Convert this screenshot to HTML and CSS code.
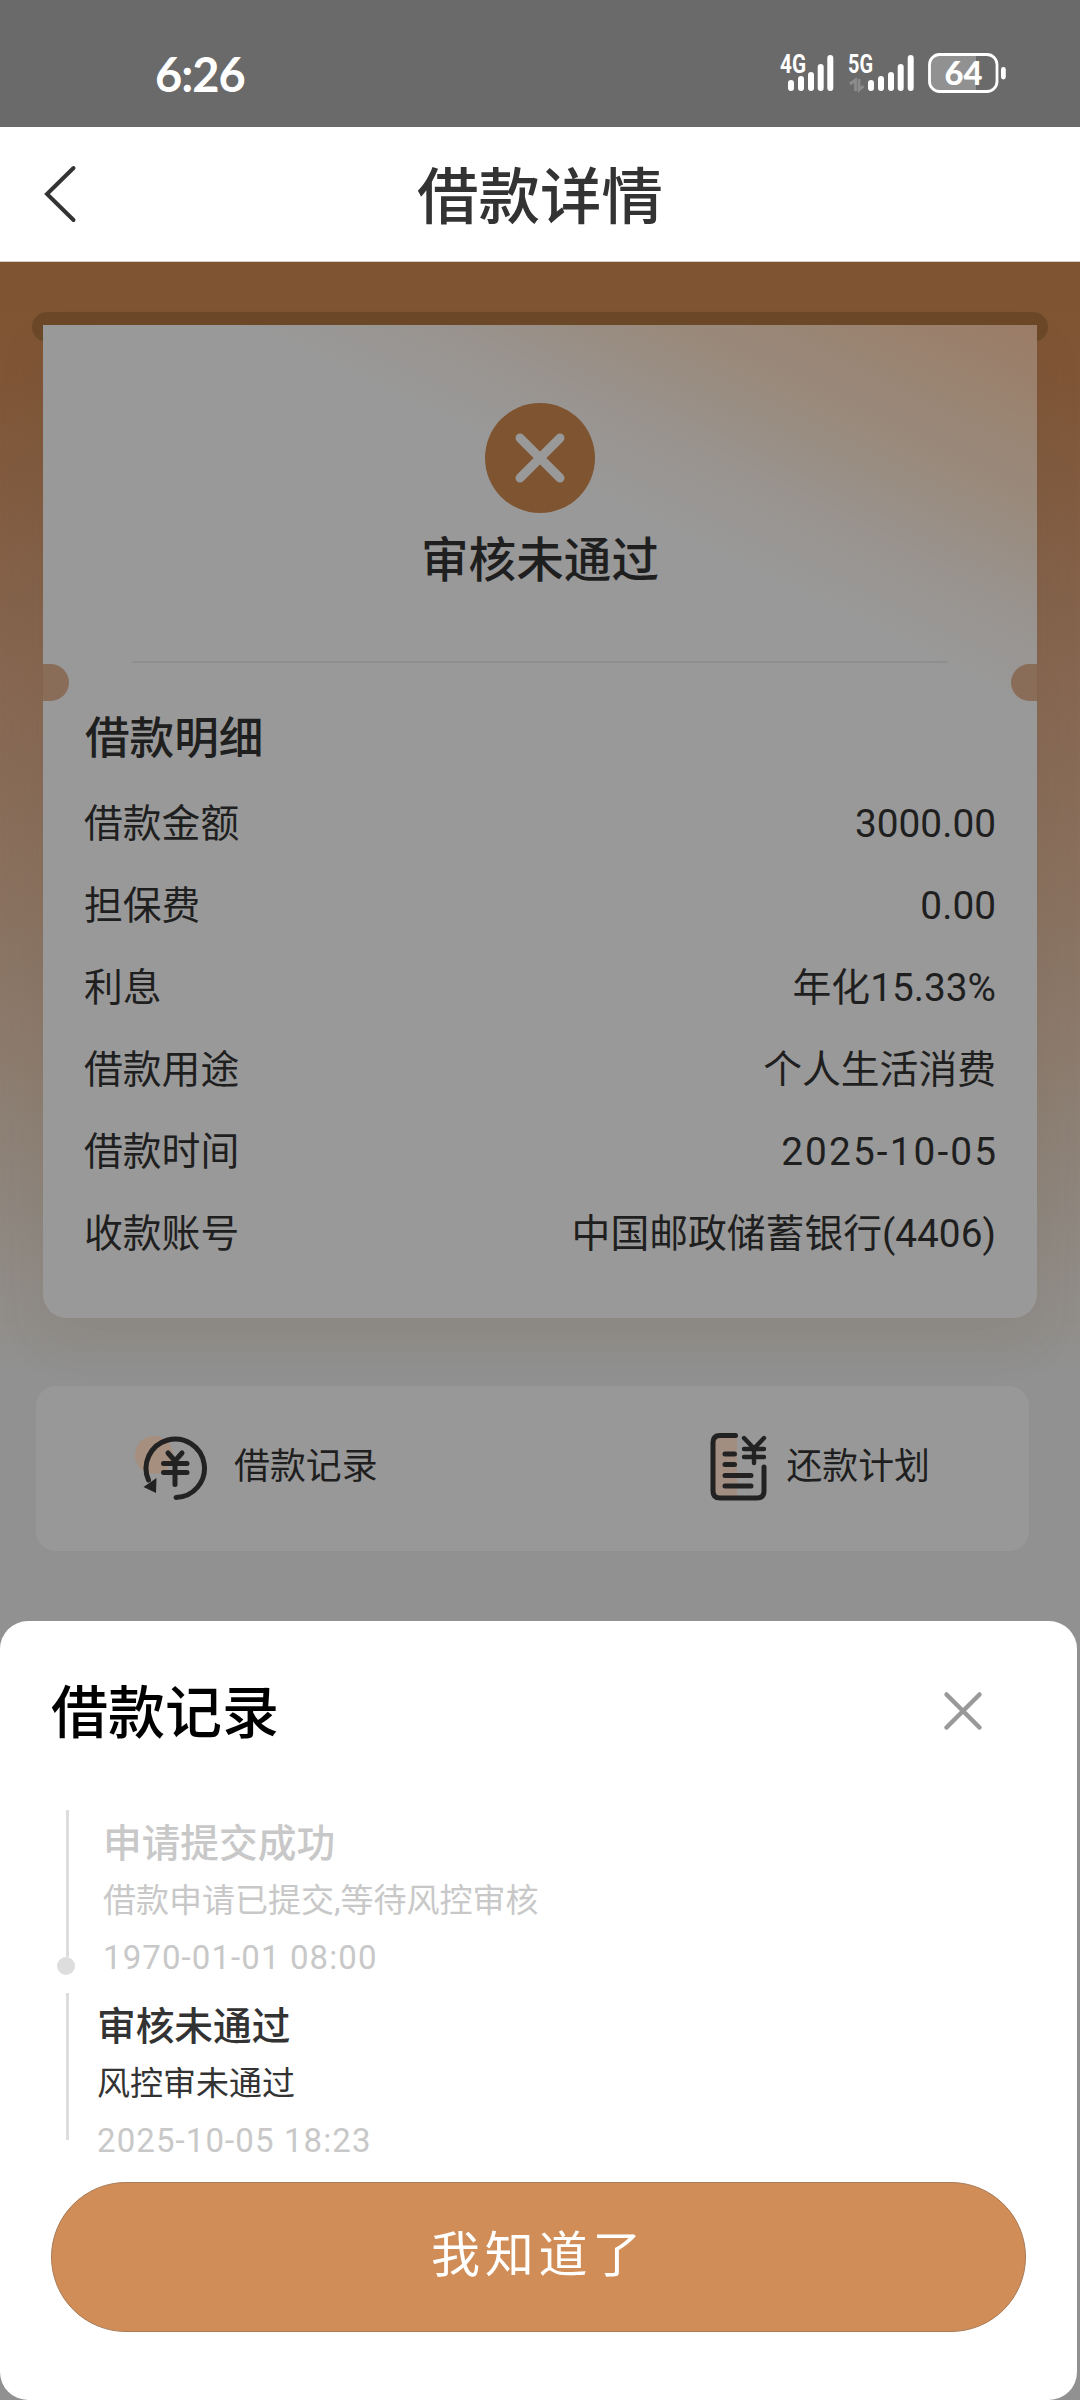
FILE: index.html
```html
<!DOCTYPE html>
<html lang="zh-CN">
<head>
<meta charset="utf-8">
<title>借款详情</title>
<link rel="stylesheet" href="styles.css">
</head>
<body>
<div class="screen">
  <div class="status">
    <span class="clock">6:26</span>
    <svg class="status-icons" width="228" height="48" viewBox="778 50 228 48">
      <g fill="#fff" font-family="Roboto, sans-serif" font-weight="700">
        <text x="780" y="73" font-size="25" textLength="26" lengthAdjust="spacingAndGlyphs">4G</text>
        <text x="848" y="73" font-size="25" textLength="25" lengthAdjust="spacingAndGlyphs">5G</text>
      </g>
      <g stroke="#fff" stroke-width="6" stroke-linecap="round">
        <path d="M791 83V88M801 79V88M811 75V88M820.700 67V88M830.300 58V88"/>
        <path d="M871 83V88M881 79V88M891 75V88M900.700 67V88M910.700 58V88"/>
      </g>
      <path d="M850 84L855.500 80V91M859 79V90L863.500 86" fill="none" stroke="#8c8c8c" stroke-width="2.800"/>
      <path d="M940 55H976V91H940Q930 91 930 81V65Q930 55 940 55Z" fill="#919191"/>
      <rect x="929.500" y="54.500" width="67.500" height="37" rx="10" fill="none" stroke="#fff" stroke-width="2.800"/>
      <rect x="1001" y="67" width="4.800" height="12.500" rx="2.400" fill="#fff"/>
      <text x="944.500" y="85" font-family="Lato, sans-serif" font-weight="900" font-size="33" fill="#fff" textLength="38" lengthAdjust="spacingAndGlyphs">64</text>
    </svg>
  </div>
  <header class="header">
    <svg class="back" width="40" height="64" viewBox="0 0 40 64"><path d="M30.500 6L4 32L30.500 58" fill="none" stroke="#333" stroke-width="4" stroke-linecap="round"/></svg>
    <h1>借款详情</h1>
  </header>
  <main class="main">
    <div class="slot"></div>
    <section class="card">
      <svg class="result-icon" width="110" height="110" viewBox="0 0 110 110">
        <circle cx="55" cy="55" r="55" fill="#7f5431"/>
        <path d="M35 35L75 75M75 35L35 75" stroke="#999" stroke-width="9" stroke-linecap="round"/>
      </svg>
      <div class="result">审核未通过</div>
      <div class="divider"></div>
      <span class="notch notch-left"></span>
      <span class="notch notch-right"></span>
      <h2>借款明细</h2>
      <dl class="rows">
        <div><dt>借款金额</dt><dd>3000.00</dd></div>
        <div><dt>担保费</dt><dd>0.00</dd></div>
        <div><dt>利息</dt><dd>年化15.33%</dd></div>
        <div><dt>借款用途</dt><dd>个人生活消费</dd></div>
        <div><dt>借款时间</dt><dd class="date">2025-10-05</dd></div>
        <div><dt>收款账号</dt><dd>中国邮政储蓄银行(4406)</dd></div>
      </dl>
    </section>
    <nav class="actions">
      <div class="action">
        <svg width="76" height="70" viewBox="132 1432 76 70">
          <circle cx="154" cy="1455" r="19" fill="#a68f7f"/>
          <g fill="none" stroke="#222" stroke-linecap="round">
            <path d="M176 1497.500A29.200 29.200 0 1 0 148.500 1480" stroke-width="5"/>
            <path d="M168 1453L175 1461L182 1453M163.500 1463.500H187M163.500 1472.500H187M175 1461V1484.500" stroke-width="5"/>
          </g>
          <path d="M143.500 1487L156.500 1478L156 1493Z" fill="#222"/>
        </svg>
        <span>借款记录</span>
      </div>
      <div class="action">
        <svg width="60" height="70" viewBox="709 1432 60 70">
          <rect x="714" y="1436" width="23" height="62" fill="#a18e80"/>
          <g fill="none" stroke="#222" stroke-width="5" stroke-linecap="round" stroke-linejoin="round">
            <path d="M735.500 1435.500H720Q713 1435.500 713 1442.500V1491Q713 1498 720 1498H757Q764 1498 764 1491V1467"/>
            <path d="M725 1454H734.500M725 1464.500H734.500M725 1475.500H751M725 1486H751"/>
            <path d="M744 1438L754 1448.500L764 1438M744 1449H764M744 1457H764M754 1449V1463" stroke-width="4.400"/>
          </g>
        </svg>
        <span>还款计划</span>
      </div>
    </nav>
  </main>
  <section class="sheet">
    <div class="sheet-head">
      <h2>借款记录</h2>
      <svg width="40" height="40" viewBox="0 0 40 40"><path d="M3.500 3.500L36.500 36.500M36.500 3.500L3.500 36.500" stroke="#999" stroke-width="4.500" stroke-linecap="round"/></svg>
    </div>
    <ol class="timeline">
      <li class="past">
        <strong>申请提交成功</strong>
        <p>借款申请已提交,等待风控审核</p>
        <time>1970-01-01 08:00</time>
      </li>
      <li class="current">
        <strong>审核未通过</strong>
        <p>风控审未通过</p>
        <time>2025-10-05 18:23</time>
      </li>
    </ol>
    <button class="confirm">我知道了</button>
  </section>
</div>
</body>
</html>
```
FILE: styles.css
```css
* { box-sizing: border-box; margin: 0; padding: 0; }

body {
  width: 1080px;
  font-family: Roboto, "Noto Sans CJK SC", sans-serif;
  color: #1f1f1f;
}

svg { display: block; flex: none; }

.screen {
  position: relative;
  display: flex;
  flex-direction: column;
  width: 1080px;
  height: 2400px;
  overflow: hidden;
  background: #919191;
}

.status {
  display: flex;
  justify-content: space-between;
  height: 127px;
  padding: 50px 74px 0 155px;
  background: #6a6a6a;
}
.clock {
  font-family: Lato, sans-serif;
  font-size: 47px;
  line-height: 48px;
  font-weight: 700;
  letter-spacing: -1px;
  color: #fff;
}

.header {
  display: grid;
  grid-template-columns: 100px 1fr 100px;
  align-items: center;
  height: 135px;
  background: #fff;
  border-bottom: 1px solid #d8cec5;
}
.back { margin-left: 43px; }
.header h1 {
  padding-top: 8px;
  font-size: 61.5px;
  line-height: 90px;
  font-weight: 500;
  text-align: center;
  color: #333;
}

.main {
  flex: 1;
  padding-top: 50px;
  background: linear-gradient(#7f5431 0, #7f5536 110px, #866650 400px, #8a7260 650px, #8e8379 900px, #918e8a 1060px, #919191 1110px);
}
.slot {
  height: 30px;
  margin: 0 32px -17px;
  border-radius: 15px;
  background: #6c4829;
}
.card {
  position: relative;
  display: flex;
  flex-direction: column;
  align-items: center;
  height: 993px;
  margin: 0 43px;
  padding: 78px 42px 0;
  border-radius: 0 0 24px 24px;
  background: linear-gradient(206deg, #9b7c66 0, #9a8370 80px, #998c80 190px, #999490 270px, #999 350px);
  box-shadow: 0 24px 48px rgba(90, 80, 60, .1);
}
.result {
  margin-top: 18px;
  font-size: 47.6px;
  line-height: 60px;
  font-weight: 500;
}
.divider {
  width: 816px;
  height: 2px;
  margin-top: 70px;
  background: #8f8f8f;
}
.notch {
  position: absolute;
  top: 339px;
  width: 26px;
  height: 37px;
  background: #896d59;
}
.notch-left { left: 0; border-radius: 0 19px 19px 0; }
.notch-right { right: 0; border-radius: 19px 0 0 19px; }
.card h2 {
  align-self: stretch;
  margin-top: 46px;
  font-size: 44.6px;
  line-height: 60px;
  font-weight: 500;
}
.rows {
  align-self: stretch;
  margin: 14px -1px 0;
  font-size: 38.8px;
  line-height: 82px;
}
.rows div { display: flex; justify-content: space-between; height: 82px; }
.date { letter-spacing: 2.1px; margin-right: -2.1px; }

.actions {
  display: flex;
  justify-content: space-between;
  align-items: center;
  height: 165px;
  margin: 68px 51px 0 36px;
  padding: 0 99px 4px 96px;
  border-radius: 20px;
  background: #989898;
}
.action { display: flex; align-items: center; font-size: 35.9px; line-height: 50px; }
.action:first-child { gap: 26px; }
.action:last-child { gap: 17px; }

.sheet {
  position: absolute;
  left: 0;
  bottom: 0;
  width: 1077px;
  height: 779px;
  padding: 50px 51px 0;
  border-radius: 28px;
  background: #fff;
}
.sheet-head {
  display: flex;
  justify-content: space-between;
  align-items: center;
  height: 80px;
  padding-right: 43px;
}
.sheet-head h2 {
  padding-top: 6px;
  font-size: 57px;
  line-height: 80px;
  font-weight: 500;
  color: #000;
}
.timeline { list-style: none; margin-top: 58px; }
.timeline li {
  position: relative;
  display: flex;
  flex-direction: column;
  height: 183px;
  padding: 6px 0 0 46px;
  font-size: 33px;
  line-height: 57px;
}
.timeline .past { padding-left: 52px; color: #c8c8c8; }
.timeline .current { color: #333; }
.timeline li::before {
  content: "";
  position: absolute;
  left: 15px;
  top: 1px;
  width: 3px;
  height: 147px;
  background: #ddd;
}
.timeline .past::after {
  content: "";
  position: absolute;
  left: 6px;
  top: 148px;
  width: 18px;
  height: 18px;
  border-radius: 50%;
  background: #ddd;
}
.timeline strong { font-size: 38.7px; font-weight: 500; }
.timeline time { letter-spacing: 1.1px; color: #c8c8c8; }
.confirm {
  display: block;
  width: 975px;
  height: 150px;
  margin-top: 7px;
  padding-bottom: 3px;
  border: 1.5px solid #a97b57;
  border-radius: 75px;
  background: #d18d57;
  color: #fff;
  font: 400 49px/1 Roboto, "Noto Sans CJK SC", sans-serif;
  letter-spacing: 4.700px;
}
```
